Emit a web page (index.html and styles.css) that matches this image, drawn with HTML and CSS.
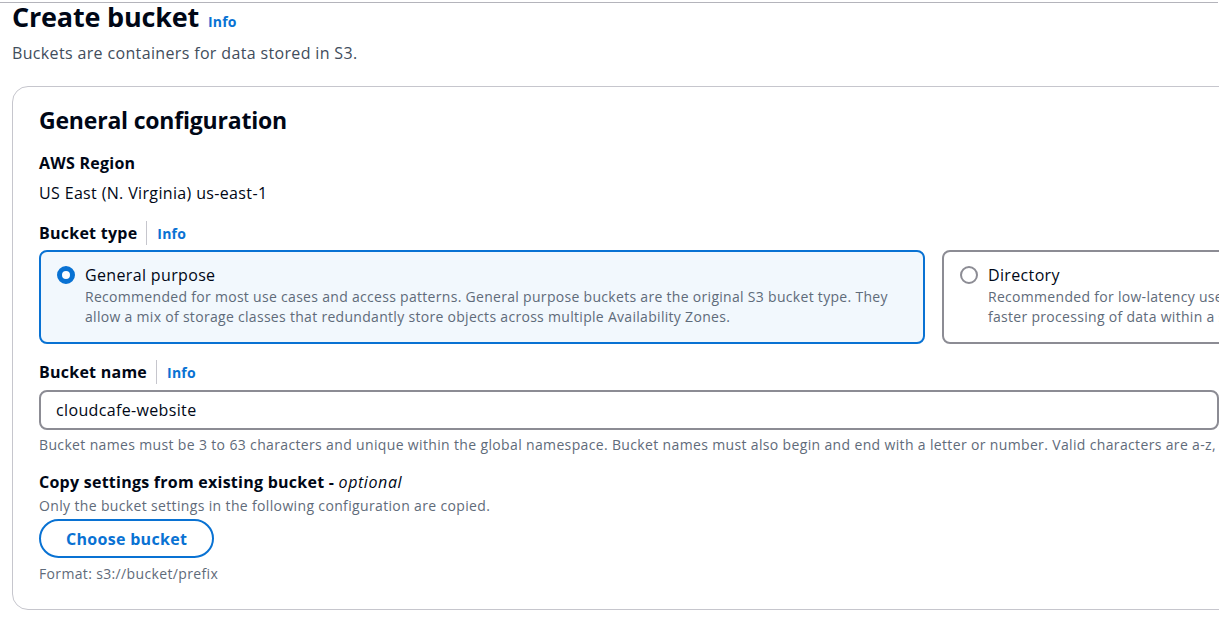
FILE: index.html
```html
<!DOCTYPE html>
<html lang="en">
<head>
<meta charset="utf-8">
<title>Create bucket</title>
<link rel="stylesheet" href="styles.css">
</head>
<body>
<div class="topline"></div>
<main class="page">
  <header class="page-header">
    <h1 class="title">Create bucket <a class="info info-title" href="#">Info</a></h1>
    <p class="subtitle">Buckets are containers for data stored in S3.</p>
  </header>
  <section class="card">
    <h2 class="card-title">General configuration</h2>

    <div class="field">
      <div class="label">AWS Region</div>
      <div class="value">US East (N. Virginia) us-east-1</div>
    </div>

    <div class="field field-type">
      <div class="label-row"><span class="label">Bucket type</span><span class="divider"></span><a class="info" href="#">Info</a></div>
      <div class="tiles">
        <div class="tile selected">
          <span class="radio on"></span>
          <div class="tile-body">
            <div class="tile-title">General purpose</div>
            <div class="tile-desc">Recommended for most use cases and access patterns. General purpose buckets are the original S3 bucket type. They allow a mix of storage classes that redundantly store objects across multiple Availability Zones.</div>
          </div>
        </div>
        <div class="tile">
          <span class="radio"></span>
          <div class="tile-body">
            <div class="tile-title">Directory</div>
            <div class="tile-desc">Recommended for low-latency use cases. These buckets use only the S3 Express One Zone storage class, which provides faster processing of data within a single Availability Zone.</div>
          </div>
        </div>
      </div>
    </div>

    <div class="field field-name">
      <div class="label-row"><span class="label">Bucket name</span><span class="divider"></span><a class="info" href="#">Info</a></div>
      <div class="input">cloudcafe-website</div>
      <div class="hint hint-name">Bucket names must be 3 to 63 characters and unique within the global namespace. Bucket names must also begin and end with a letter or number. Valid characters are a-z, 0-9, periods (.), and hyphens (-).</div>
    </div>

    <div class="field last">
      <div class="label">Copy settings from existing bucket - <em class="opt">optional</em></div>
      <div class="hint hint-tight">Only the bucket settings in the following configuration are copied.</div>
      <button class="btn" type="button">Choose bucket</button>
      <div class="hint">Format: s3://bucket/prefix</div>
    </div>
  </section>
</main>
</body>
</html>
```

FILE: styles.css
```css
* { box-sizing: border-box; }
html, body { margin: 0; padding: 0; }
body {
  width: 1219px;
  height: 621px;
  overflow: hidden;
  background: #ffffff;
  font-family: "Open Sans", "Noto Sans", sans-serif;
  color: #000716;
  position: relative;
  letter-spacing: 0.35px;
}
.topline {
  position: absolute;
  left: 0; top: 2px;
  width: 1218px;
  height: 1px;
  background: #b4b4bb;
}
.page {
  padding: 0 0 0 12px;
  width: 1880px;
}
.title {
  margin: 0;
  font-size: 27px;
  line-height: 34px;
  font-weight: 700;
  letter-spacing: -0.2px;
  display: flex;
  align-items: baseline;
  gap: 9px;
}
.info {
  color: #0972d3;
  font-weight: 700;
  font-size: 14px;
  letter-spacing: 0.2px;
  text-decoration: none;
}
.subtitle {
  margin: 2px 0 0;
  font-size: 16px;
  line-height: 24px;
  color: #414d5c;
}
.card {
  margin-top: 21px;
  width: 1841px;
  border: 1px solid #c6c6cd;
  border-radius: 16px;
  padding: 18px 26px 25px;
}
.card-title {
  margin: 0 0 17px;
  font-size: 23px;
  line-height: 30px;
  font-weight: 700;
  letter-spacing: -0.2px;
}
.field { margin-bottom: 17px; }
.field-type { margin-bottom: 16px; }
.field-name { margin-bottom: 16px; }
.field.last { margin-bottom: 0; }
.label {
  font-size: 16px;
  line-height: 22px;
  font-weight: 700;
  letter-spacing: 0.25px;
}
.opt { font-weight: 400; letter-spacing: 0.6px; }
.value {
  margin-top: 8px;
  font-size: 16px;
  line-height: 22px;
}
.label-row {
  display: flex;
  align-items: center;
  height: 24px;
}
.divider {
  width: 1px;
  height: 24px;
  background: #c6c6cd;
  margin: 0 10px 0 9px;
}
.tiles {
  margin-top: 5px;
  display: grid;
  grid-template-columns: 886px 886px;
  gap: 17px;
}
.tile {
  display: flex;
  gap: 10px;
  border: 2px solid #8c8c94;
  border-radius: 8px;
  padding: 11px 4px 15px 16px;
  min-height: 94px;
}
.tile.selected {
  border-color: #0972d3;
  background: #f2f8fd;
}
.radio {
  flex: none;
  width: 18px;
  height: 18px;
  margin-top: 3px;
  border-radius: 50%;
  border: 2px solid #8c8c94;
  background: #fff;
}
.radio.on {
  border: 5px solid #0972d3;
}
.tile-title {
  font-size: 16px;
  line-height: 24px;
}
.tile-desc {
  font-size: 14px;
  line-height: 20px;
  color: #5f6b7a;
  letter-spacing: 0.3px;
}
.input {
  margin-top: 6px;
  width: 1180px;
  height: 40px;
  border: 2px solid #8c8c94;
  border-radius: 8px;
  padding: 0 15px;
  font-size: 16px;
  line-height: 36px;
}
.hint {
  margin-top: 3px;
  font-size: 14px;
  line-height: 20px;
  color: #5f6b7a;
}
.hint-name { margin-top: 5px; white-space: nowrap; }
.hint-tight { margin-top: 3px; }
.btn {
  display: block;
  margin: 3px 0 6px;
  height: 39px;
  padding: 0 25px;
  border: 2px solid #0972d3;
  border-radius: 20px;
  background: #fff;
  color: #0972d3;
  font-family: inherit;
  font-size: 16px;
  font-weight: 700;
  letter-spacing: 0.3px;
}
```
